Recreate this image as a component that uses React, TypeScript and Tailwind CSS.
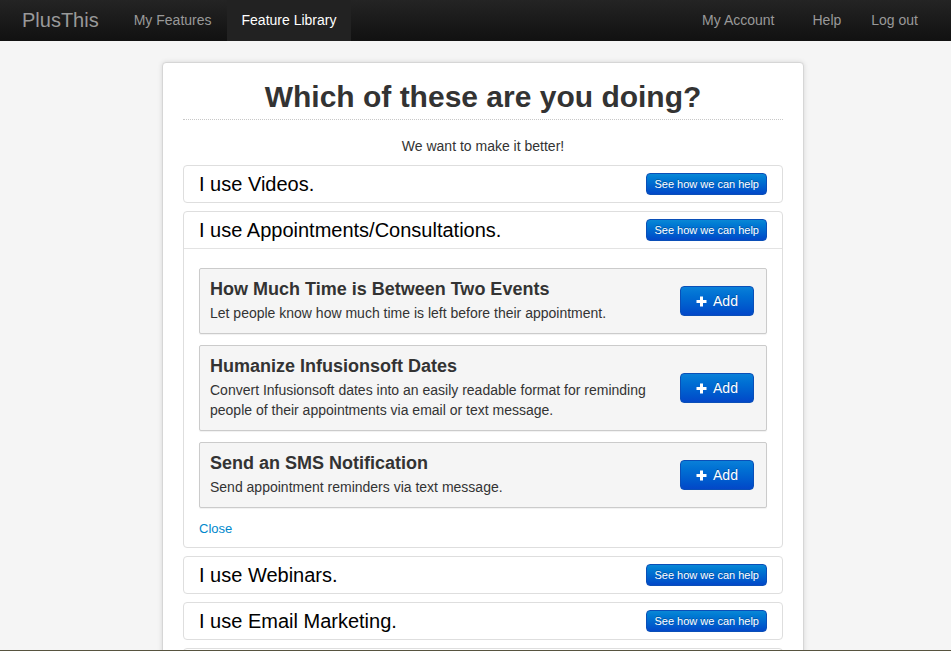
import React from "react";

const font = { fontFamily: '"Liberation Sans", Arial, Helvetica, sans-serif' };

function PlusIcon() {
  return (
    <svg width="11" height="11" viewBox="0 0 11 11" className="shrink-0">
      <rect x="4" y="0.5" width="3" height="10" fill="#fff" />
      <rect x="0.5" y="4" width="10" height="3" fill="#fff" />
    </svg>
  );
}

function HelpButton() {
  return (
    <button className="h-[22px] px-[7px] rounded-[4px] border border-[#0a4fb8] bg-gradient-to-b from-[#0a88d6] to-[#0447c8] text-white text-[11px] leading-[20px] [text-shadow:0_-1px_0_rgba(0,0,0,0.25)]">
      See how we can help
    </button>
  );
}

function AddButton() {
  return (
    <button className="shrink-0 h-[30px] w-[74px] flex items-center justify-center gap-[6px] rounded-[4px] border border-[#0a4fb8] bg-gradient-to-b from-[#0a80d8] to-[#0447c8] text-white text-[14px] leading-[20px] [text-shadow:0_-1px_0_rgba(0,0,0,0.25)]">
      <PlusIcon />
      <span>Add</span>
    </button>
  );
}

function Item({ title, children }: { title: string; children?: React.ReactNode }) {
  return (
    <div className="border border-[#dedede] rounded-[4px] bg-white">
      <div
        className={
          "flex items-center justify-between pl-[15px] pr-[15px]" +
          (children ? " h-[37px] border-b border-[#e3e3e3]" : " h-[36px]")
        }
      >
        <span className="text-[20px] leading-[22px] text-black">{title}</span>
        <HelpButton />
      </div>
      {children}
    </div>
  );
}

function Feature({ title, desc }: { title: string; desc: string }) {
  return (
    <div className="flex items-center border border-[#cbcbcb] rounded-[2px] bg-[#f5f5f5] shadow-[0_1px_1px_rgba(0,0,0,0.06)] pl-[10px] pr-[12px] pt-[10px] pb-[10px]">
      <div className="flex-1 pr-[24px]">
        <div className="text-[18px] leading-[20px] font-bold text-[#333]">{title}</div>
        <div className="mt-[4px] text-[14px] leading-[20px] text-[#333]">{desc}</div>
      </div>
      <AddButton />
    </div>
  );
}

export default function App() {
  return (
    <div style={font} className="min-h-screen bg-[#f5f5f5]">
      <div className="h-[41px] bg-gradient-to-b from-[#242424] to-[#111111] flex items-stretch justify-between pr-[18px]">
        <div className="flex items-stretch">
          <div className="pl-[22px] pr-[20px] text-[20px] leading-[40px] text-[#999]">PlusThis</div>
          <div className="px-[15px] text-[14px] leading-[40px] text-[#999]">My Features</div>
          <div className="px-[15px] text-[14px] leading-[40px] text-white bg-[#222]">Feature Library</div>
        </div>
        <div className="flex items-stretch">
          <div className="px-[15px] mr-[8px] text-[14px] leading-[40px] text-[#999]">My Account</div>
          <div className="px-[15px] text-[14px] leading-[40px] text-[#999]">Help</div>
          <div className="px-[15px] text-[14px] leading-[40px] text-[#999]">Log out</div>
        </div>
      </div>

      <div className="pt-[21px] pb-[40px]">
        <div className="ml-[162px] w-[642px] bg-white border border-[#d6d6d6] rounded-[4px] shadow-[0_0_5px_rgba(0,0,0,0.12)] px-[20px] pt-[14px] pb-[20px]">
          <h1 className="text-[30px] leading-[40px] font-bold text-[#333] text-center pb-[2px] border-b border-dotted border-[#c8c8c8]">
            Which of these are you doing?
          </h1>
          <p className="mt-[16px] text-[14px] leading-[20px] text-[#333] text-center">We want to make it better!</p>

          <div className="mt-[9px] flex flex-col gap-[8px]">
            <Item title="I use Videos." />
            <Item title="I use Appointments/Consultations.">
              <div className="px-[15px] pt-[19px] pb-[8px]">
                <div className="flex flex-col gap-[11px]">
                  <Feature
                    title="How Much Time is Between Two Events"
                    desc="Let people know how much time is left before their appointment."
                  />
                  <Feature
                    title="Humanize Infusionsoft Dates"
                    desc="Convert Infusionsoft dates into an easily readable format for reminding people of their appointments via email or text message."
                  />
                  <Feature
                    title="Send an SMS Notification"
                    desc="Send appointment reminders via text message."
                  />
                </div>
                <div className="mt-[11px] text-[13px] leading-[20px] text-[#0088cc]">Close</div>
              </div>
            </Item>
            <Item title="I use Webinars." />
            <Item title="I use Email Marketing." />
            <Item title="I use Memberships." />
          </div>
        </div>
      </div>

      <div className="fixed left-0 right-0 bottom-0 h-px bg-[#57533f]" />
    </div>
  );
}
